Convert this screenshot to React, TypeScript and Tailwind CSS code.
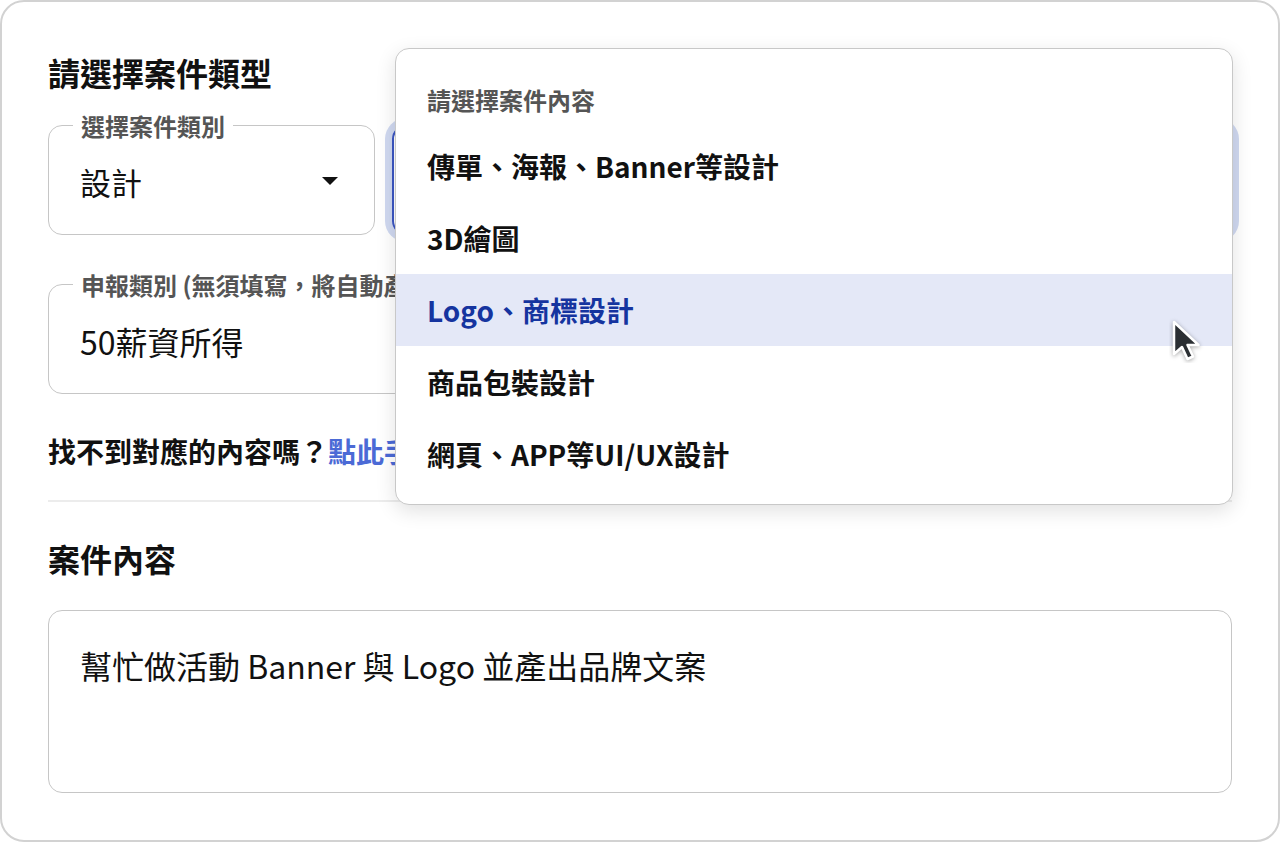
import React from "react";

const items = [
  "傳單、海報、Banner等設計",
  "3D繪圖",
  "Logo、商標設計",
  "商品包裝設計",
  "網頁、APP等UI/UX設計",
];

function Legend({ children }: { children: React.ReactNode }) {
  return (
    <span className="absolute left-[24px] top-0 -translate-y-1/2 bg-white px-2 text-[24px] leading-[30px] font-semibold text-[#555555] whitespace-nowrap">
      {children}
    </span>
  );
}

function Cursor() {
  return (
    <svg width="40" height="46" viewBox="0 0 40 46" className="absolute left-[1169px] top-[317px]">
      <path
        d="M5 5 L5 37 L13 30 L18.5 42 L24 39.5 L18.5 28 L29.5 28 Z"
        fill="#2b2f33"
        stroke="#ffffff"
        strokeWidth="2.5"
        strokeLinejoin="round"
        style={{ filter: "drop-shadow(0 1px 2px rgba(0,0,0,0.35))" }}
      />
    </svg>
  );
}

export default function App() {
  return (
    <div
      className="relative w-[1280px] h-[842px] bg-white"
      style={{ fontFamily: '"Noto Sans CJK TC", "Noto Sans", sans-serif' }}
    >
      <div className="relative h-[842px] border-2 border-[#d2d2d2] rounded-[24px] pt-[48px] px-[46px] text-[#111111]">
        <h2 className="text-[32px] leading-[44px] font-bold">請選擇案件類型</h2>

        <div className="mt-[31px] grid grid-cols-[327px_1fr] gap-[17px]">
          <div className="relative h-[110px] border-[1.5px] border-[#c6c6c6] rounded-[14px] flex items-center pl-[31px] pr-[36px] pt-[4px]">
            <Legend>選擇案件類別</Legend>
            <span className="flex-1 text-[31px] leading-[42px]">設計</span>
            <svg width="16" height="8" viewBox="0 0 16 8" className="mt-[-2px]">
              <path d="M0 0 L16 0 L8 8 Z" fill="#111111" />
            </svg>
          </div>
          <div className="h-[110px] border-2 border-[#3b56c2] rounded-[14px] shadow-[0_0_0_7px_#d0d9f1]" />
        </div>

        <div className="relative mt-[49px] h-[110px] border-[1.5px] border-[#c6c6c6] rounded-[14px] flex items-center pl-[31px] pt-[4px]">
          <Legend>申報類別 (無須填寫，將自動產生)</Legend>
          <span className="text-[32px] leading-[42px]">50薪資所得</span>
        </div>

        <p className="mt-[37px] text-[28px] leading-[40px] font-bold">
          找不到對應的內容嗎？<span className="text-[#4b6ad6]">點此手動輸入</span>
        </p>

        <div className="mt-[29px] border-t-2 border-[#ececec]" />

        <h2 className="mt-[34px] text-[32px] leading-[44px] font-bold">案件內容</h2>

        <div className="mt-[30px] h-[183px] border-[1.5px] border-[#c6c6c6] rounded-[14px] pl-[31px] pt-[32px]">
          <p className="text-[32px] leading-[44px]">幫忙做活動 Banner 與 Logo 並產出品牌文案</p>
        </div>
      </div>

      <div className="absolute left-[395px] top-[48px] w-[838px] h-[457px] bg-white border-[1.5px] border-[#c8c8c8] rounded-[14px] shadow-[0_6px_20px_rgba(0,0,0,0.12)] pt-[34px] pb-[14px] overflow-hidden">
        <div className="pl-[31px] text-[24px] leading-[34px] font-semibold text-[#555555]">請選擇案件內容</div>
        <ul className="mt-[13px]">
          {items.map((t, i) => (
            <li
              key={t}
              className={
                i === 2
                  ? "h-[72px] flex items-center pl-[31px] text-[28px] font-bold bg-[#e4e8f7] text-[#15349f]"
                  : "h-[72px] flex items-center pl-[31px] text-[28px] font-bold text-[#111111]"
              }
            >
              {t}
            </li>
          ))}
        </ul>
      </div>

      <Cursor />
    </div>
  );
}
